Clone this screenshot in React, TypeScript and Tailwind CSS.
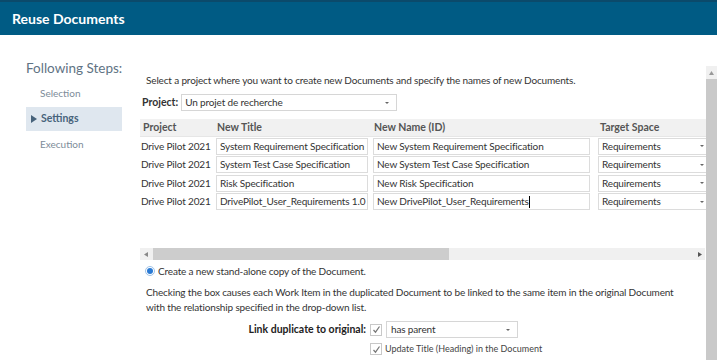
import React from "react";

const rows = [
  ["System Requirement Specification", "New System Requirement Specification"],
  ["System Test Case Specification", "New System Test Case Specification"],
  ["Risk Specification", "New Risk Specification"],
  ["DrivePilot_User_Requirements 1.0", "New DrivePilot_User_Requirements"],
];

function Caret() {
  return (
    <svg width="6" height="4" viewBox="0 0 6 4" className="shrink-0">
      <path d="M1 1 L3 3 L5 1 Z" fill="#666" />
    </svg>
  );
}

function Check() {
  return (
    <div className="w-[12px] h-[12px] border border-[#c8c8c8] bg-white flex items-center justify-center shrink-0">
      <svg width="9" height="9" viewBox="0 0 9 9">
        <path d="M1.5 5 L3.5 7.2 L7.5 1.5" stroke="#777" strokeWidth="1.2" fill="none" />
      </svg>
    </div>
  );
}

export default function App() {
  return (
    <div
      className="w-[717px] h-[360px] overflow-hidden bg-white text-[#333] flex flex-col"
      style={{ fontFamily: 'Lato, "Open Sans", sans-serif' }}
    >
      <div className="h-[35px] shrink-0 bg-[#005b84] border-t-2 border-[#0b4a6b] flex items-center pl-[12px]">
        <span className="text-white font-bold text-[14px]">Reuse Documents</span>
      </div>
      <div className="flex flex-1 min-h-0">
        <div className="w-[140px] shrink-0 pt-[23px]">
          <div className="pl-[26px] text-[13.5px] leading-[20px] text-[#5f7384]">Following Steps:</div>
          <div className="mt-[3px] pl-[40px] h-[25px] flex items-center text-[10px] text-[#7d8c99]">Selection</div>
          <div className="mt-[1px] ml-[26px] mr-[18px] h-[24px] bg-[#dfe7ef] flex items-center pl-[5px] gap-[4px]">
            <svg width="6" height="8" viewBox="0 0 6 8">
              <path d="M0 0 L6 4 L0 8 Z" fill="#47637b" />
            </svg>
            <span className="text-[10.5px] font-bold text-[#47637b]">Settings</span>
          </div>
          <div className="mt-[1px] pl-[40px] h-[25px] flex items-center text-[10px] text-[#7d8c99]">Execution</div>
        </div>
        <div className="flex-1 min-w-0 overflow-hidden text-[10px] tracking-[-0.15px]">
          <div className="pl-[6px] pt-[37px] h-[17px] box-content flex items-center whitespace-nowrap">
            Select a project where you want to create new Documents and specify the names of new Documents.
          </div>
          <div className="mt-[5px] pl-[2px] flex items-center gap-[3px] h-[17px]">
            <span className="font-bold text-[10.5px] tracking-normal">Project:</span>
            <div className="w-[216px] h-[17px] border border-[#d6d6d6] flex items-center justify-between pl-[3px] pr-[6px]">
              <span>Un projet de recherche</span>
              <Caret />
            </div>
          </div>
          <div className="mt-[8px] w-[580px] whitespace-nowrap">
            <div className="flex h-[18px] bg-[#f1f1f1] border-b border-[#e6e6e6] items-center font-bold text-[10.5px] tracking-normal text-[#555]">
              <div className="w-[74px] pl-[3px]">Project</div>
              <div className="w-[157px] pl-[3px]">New Title</div>
              <div className="w-[224px] pl-[3px]">New Name (ID)</div>
              <div className="w-[125px] pl-[5px]">Target Space</div>
            </div>
            {rows.map((r, i) => (
              <div key={i} className="flex h-[18.5px] items-center">
                <div className="w-[74px] pl-[1px]">Drive Pilot 2021</div>
                <div className="w-[157px] pl-[2px] pr-[3px]">
                  <div className="h-[17px] border border-[#dcdcdc] flex items-center pl-[3px] overflow-hidden">{r[0]}</div>
                </div>
                <div className="w-[224px] pl-[2px] pr-[5px]">
                  <div className="h-[17px] border border-[#dcdcdc] flex items-center pl-[3px] overflow-hidden">
                    {r[1]}
                    {i === 3 && <span className="inline-block w-[1px] h-[12px] bg-black" />}
                  </div>
                </div>
                <div className="w-[114px] pl-[3px]">
                  <div className="h-[17px] border border-[#dcdcdc] flex items-center justify-between pl-[3px] pr-[3px]">
                    <span>Requirements</span>
                    <Caret />
                  </div>
                </div>
              </div>
            ))}
          </div>
          <div className="mt-[37px] h-[12px] w-[565px] bg-[#f0f0f0] flex items-center relative">
            <svg width="4" height="5" viewBox="0 0 4 5" className="ml-[4px]">
              <path d="M4 0 L0 2.5 L4 5 Z" fill="#888" />
            </svg>
            <div className="ml-[5px] w-[296px] h-[12px] bg-[#cdcdcd]" />
            <div className="flex-1" />
            <svg width="4" height="5" viewBox="0 0 4 5" className="mr-[3px]">
              <path d="M0 0 L4 2.5 L0 5 Z" fill="#555" />
            </svg>
          </div>
          <div className="mt-[4px] pl-[5px] flex items-center gap-[3px] h-[14px]">
            <div className="w-[10px] h-[10px] rounded-full border border-[#9fc3e8] bg-white flex items-center justify-center">
              <div className="w-[6px] h-[6px] rounded-full bg-[#2a7ad4]" />
            </div>
            <span>Create a new stand-alone copy of the Document.</span>
          </div>
          <div className="mt-[7px] pl-[6px] leading-[15px] whitespace-nowrap">
            <div>Checking the box causes each Work Item in the duplicated Document to be linked to the same item in the original Document</div>
            <div>with the relationship specified in the drop-down list.</div>
          </div>
          <div className="mt-[6px] flex items-center h-[17px]">
            <div className="w-[226px] text-right font-bold text-[10.5px] tracking-normal text-[#222]">Link duplicate to original:</div>
            <div className="ml-[4px]"><Check /></div>
            <div className="ml-[4px] w-[132px] h-[17px] border border-[#d6d6d6] flex items-center justify-between pl-[4px] pr-[6px]">
              <span>has parent</span>
              <Caret />
            </div>
          </div>
          <div className="mt-[4px] flex items-center h-[14px] pl-[230px] gap-[3px] text-[9px] tracking-normal text-[#444]">
            <Check />
            <span>Update Title (Heading) in the Document</span>
          </div>
        </div>
        <div className="w-[11px] shrink-0 mt-[31px] bg-[#f0f0f0] flex flex-col items-center">
          <svg width="5" height="4" viewBox="0 0 5 4" className="mt-[5px]">
            <path d="M0 4 L2.5 0 L5 4 Z" fill="#999" />
          </svg>
          <div className="mt-[4px] w-[11px] flex-1 bg-[#c9c9c9]" />
        </div>
      </div>
    </div>
  );
}
